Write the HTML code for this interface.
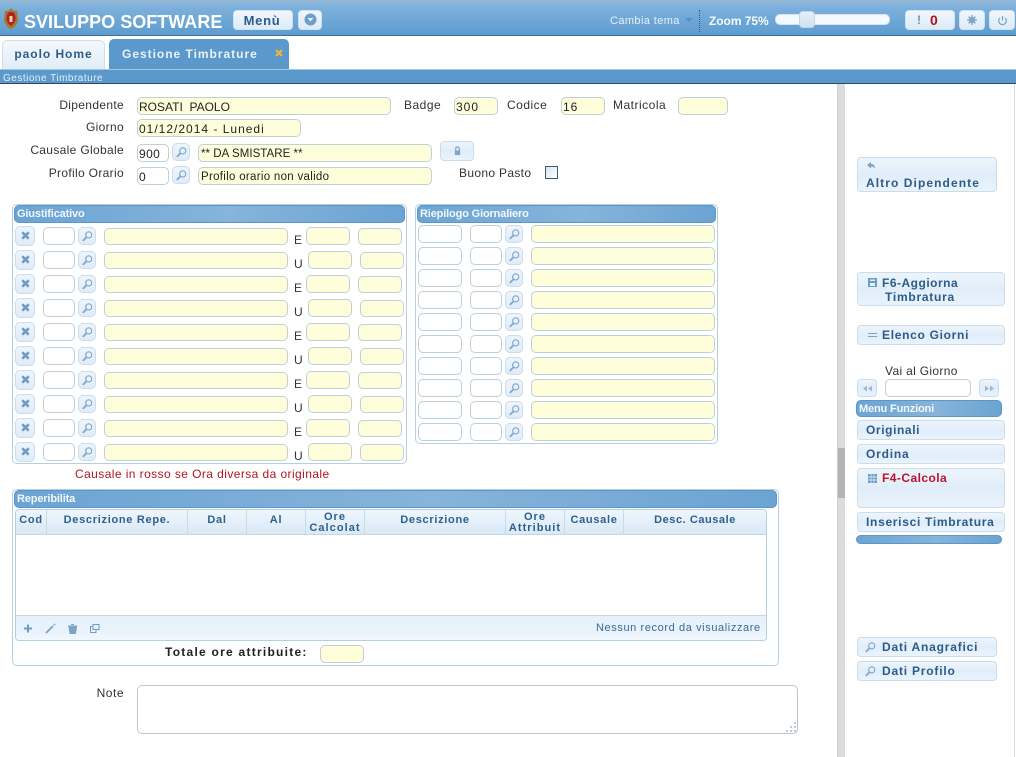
<!DOCTYPE html>
<html><head><meta charset="utf-8"><title>Gestione Timbrature</title>
<style>
*{box-sizing:border-box}
html,body{margin:0;padding:0;width:1016px;height:757px;overflow:hidden;background:#fff;font-family:"Liberation Sans",sans-serif;font-size:12px;color:#222}
div,span,svg{position:absolute}
.hd{left:0;top:0;width:1016px;height:36px;background:linear-gradient(#9fb6c8 0,#8db8dc 2px,#7bb0db 8px,#5f9dd0 34px);border-bottom:1px solid #3d6f9b}
.hb{background:linear-gradient(#f0f7fd,#dcebf8);border:1px solid #cfe0ee;border-radius:4px}
.lb{white-space:nowrap;letter-spacing:.33px;color:#333}
.r{text-align:right}
.f{height:18px;border:1px solid #bfd0d8;border-radius:5px;background:#fffedb;white-space:nowrap;overflow:hidden;padding:2px 0 0 1px;letter-spacing:.4px;color:#222;line-height:14px}
.w{background:#fff}
.b{background:linear-gradient(#edf5fc,#e0edf9 50%,#e9f3fc);border:1px solid #cbdcec;border-radius:4px;color:#2d5c8a;font-weight:bold;letter-spacing:.8px;white-space:nowrap;font-size:12px}
.b span{white-space:nowrap}
.s{width:18px;height:18px;background:linear-gradient(#edf5fc,#dfecf8);border:1px solid #cbdcec;border-radius:5px}
.s svg{left:2px;top:2px}
.p{border:1px solid #b4d0e0;border-radius:5px;background:#fff}
.t{height:18px;background:linear-gradient(100deg,#6ba4d3,#86b4da 55%,#6ba3d2);border:1px solid #5a96c8;border-radius:5px;color:#f2f8fc;font-weight:bold;font-size:11px;letter-spacing:-.15px;line-height:16px;padding-left:2px;white-space:nowrap}
.gr,.rr{left:0;width:0;height:0}
.x{left:15px;top:-1px;width:20px;height:20px;background:linear-gradient(#edf5fc,#dfecf8);border:1px solid #cbdcec;border-radius:5px}
.x svg{left:4px;top:3px}
.gr .c{left:43px;width:32px}.gr .s{left:78px}.gr .d{left:104px;width:184px;top:1px;height:17px}
.gr .t1{left:306px;width:44px}.gr .t2{left:358px;width:44px;top:1px;height:17px}
.gr .l{left:294px;top:7px;line-height:12px;color:#333}
.gr.u .t1{left:308px}.gr.u .t2{left:360px}
.rr .a{left:418px;width:44px}.rr .c{left:470px;width:32px}.rr .s{left:505px}.rr .d{left:531px;width:184px}
.th{top:510px;height:25px;border-right:1px solid #c9d9e6;color:#2f5f8c;font-weight:bold;font-size:11px;letter-spacing:.7px;text-align:center;line-height:11px;white-space:nowrap}
.th.o{letter-spacing:1.05px;padding-top:1px}
.th.n{line-height:21px}
.th.o{padding-top:2px}
</style></head><body>
<svg width="0" height="0" style="position:absolute"><defs>
<symbol id="m" viewBox="0 0 14 14"><circle cx="8.300" cy="5.300" r="3.300" fill="none" stroke="#7ea6ca" stroke-width="1.200"/><path d="M5.800 8 2.500 11.200" stroke="#7ea6ca" stroke-width="1.900" stroke-linecap="round"/></symbol>
<symbol id="k" viewBox="0 0 12 12"><path d="M2.500 2.500 9.500 9.500M9.500 2.500 2.500 9.500" stroke="#6f9cc4" stroke-width="2.800"/></symbol>
</defs></svg>

<div class="hd"></div>
<svg style="left:3px;top:8px" width="16" height="21" viewBox="0 0 16 21"><path d="M8 0 10 2.500 14 3 15 11C15 16 11 20 8 21 5 20 1 16 1 11L2 3 6 2.500Z" fill="#a8782c"/><path d="M8 4C11 4 12.500 6 12.500 10.500 12.500 14 10 16.500 8 18 6 16.500 3.500 14 3.500 10.500 3.500 6 5 4 8 4Z" fill="#b3202a"/><path d="M6.500 8H9.500V14H6.500Z" fill="#e8d9a8"/></svg>
<div style="left:24px;top:11px;color:#fff;font-weight:bold;font-size:18px;line-height:22px;white-space:nowrap;letter-spacing:.02px">SVILUPPO SOFTWARE</div>
<div class="hb" style="left:233px;top:10px;width:60px;height:20px;color:#2d5c8a;font-weight:bold;font-size:13px;letter-spacing:.7px;text-align:center;line-height:20px;padding-right:2px">Menù</div>
<div class="hb" style="left:298px;top:10px;width:24px;height:20px"><svg style="left:5px;top:2px" width="13" height="13" viewBox="0 0 13 13"><circle cx="6.500" cy="6.500" r="6" fill="#6d9fcb"/><path d="M3.500 5H9.500L6.500 8.500Z" fill="#e8f2fa"/></svg></div>
<div style="left:610px;top:15px;color:#e6f0f8;font-size:11px;letter-spacing:.4px;line-height:13px;white-space:nowrap">Cambia tema</div>
<svg style="left:685px;top:18px" width="8" height="5" viewBox="0 0 8 5"><path d="M0 0H8L4 4Z" fill="#4f90c8"/></svg>
<div style="left:699px;top:10px;width:0;height:22px;border-left:1px dotted #2f5f86"></div>
<div style="left:709px;top:14px;color:#f4f9fd;font-weight:bold;font-size:12px;line-height:14px;white-space:nowrap;letter-spacing:-.05px">Zoom 75%</div>
<div style="left:775px;top:14px;width:115px;height:11px;background:#f4f9fd;border:1px solid #d5e4f0;border-radius:5px"></div>
<div style="left:799px;top:11px;width:16px;height:17px;background:linear-gradient(#e4eff9,#cfe1f1);border:1px solid #c0d6e9;border-radius:4px"></div>
<div class="hb" style="left:905px;top:10px;width:50px;height:20px"></div>
<div style="left:917px;top:13px;color:#6b8fae;font-weight:bold;font-size:12px;line-height:14px">!</div>
<div style="left:930px;top:13px;color:#b40f1f;font-weight:bold;font-size:14px;line-height:15px">0</div>
<div class="hb" style="left:959px;top:10px;width:26px;height:20px"><svg style="left:7px;top:4px" width="10" height="10" viewBox="0 0 13 13"><circle cx="6.500" cy="6.500" r="3" fill="none" stroke="#7ea6ca" stroke-width="2.500"/><path d="M6.500 0V13M0 6.500H13M2 2 11 11M11 2 2 11" stroke="#7ea6ca" stroke-width="1.700"/></svg></div>
<div class="hb" style="left:989px;top:10px;width:26px;height:20px"><svg style="left:7px;top:4px" width="11" height="11" viewBox="0 0 13 13"><path d="M6.500 1V6.500M3.500 3.500A4.500 4.500 0 1 0 9.500 3.500" fill="none" stroke="#7ea6ca" stroke-width="1.500"/></svg></div>

<div style="left:2px;top:40px;width:103px;height:29px;background:linear-gradient(#f3f8fc,#e1edf8);border:1px solid #d0dfeb;border-bottom:0;border-radius:5px 5px 0 0;color:#2d5c8a;font-weight:bold;font-size:12px;letter-spacing:.95px;text-align:center;line-height:26px">paolo Home</div>
<div style="left:109px;top:39px;width:180px;height:30px;background:#5b98cb;border-radius:5px 5px 0 0;color:#e8f2fa;font-weight:bold;font-size:12px;letter-spacing:.98px;line-height:30px;padding-left:13px;white-space:nowrap">Gestione Timbrature</div>
<svg style="left:275px;top:49px" width="8" height="8" viewBox="0 0 8 8"><path d="M1 1 7 7M7 1 1 7" stroke="#e8b93c" stroke-width="2.200"/></svg>
<div style="left:0;top:69px;width:1016px;height:15px;background:#5b98cb;border-bottom:1px solid #2c4a63;border-top:1px solid #a9c6de;color:#e4eff8;font-size:10px;letter-spacing:.5px;line-height:17px;padding-left:3px;white-space:nowrap;overflow:hidden">Gestione Timbrature</div>

<div style="left:837px;top:84px;width:8px;height:673px;background:#dcdcdc;border-left:1px solid #cfcfcf"></div>
<div style="left:838px;top:448px;width:7px;height:50px;background:#b4b4b4"></div>
<div style="left:1014px;top:84px;width:1px;height:673px;background:#dcdcdc"></div>

<div class="lb r" style="left:30px;width:94px;top:98px">Dipendente</div>
<div class="f" style="left:137px;top:97px;width:254px;letter-spacing:0">ROSATI&nbsp; PAOLO</div>
<div class="lb" style="left:404px;top:98px;letter-spacing:.5px">Badge</div>
<div class="f" style="left:454px;top:97px;width:44px;letter-spacing:1px">300</div>
<div class="lb" style="left:507px;top:98px;letter-spacing:.5px">Codice</div>
<div class="f" style="left:561px;top:97px;width:44px;letter-spacing:1px">16</div>
<div class="lb" style="left:613px;top:98px;letter-spacing:.5px">Matricola</div>
<div class="f" style="left:678px;top:97px;width:50px"></div>
<div class="lb r" style="left:30px;width:94px;top:120px">Giorno</div>
<div class="f" style="left:137px;top:119px;width:164px;letter-spacing:1px">01/12/2014 - Lunedi</div>
<div class="lb r" style="left:20px;width:104px;top:143px">Causale Globale</div>
<div class="f w" style="left:137px;top:144px;width:32px">900</div>
<div class="s" style="left:172px;top:143px"><svg width="13" height="13"><use href="#m"/></svg></div>
<div class="f" style="left:198px;top:144px;width:234px;padding-left:2px;letter-spacing:.05px;font-size:11.500px">** DA SMISTARE **</div>
<div class="b" style="left:440px;top:141px;width:34px;height:20px"><svg style="left:12px;top:4px" width="9" height="10" viewBox="0 0 10 11"><path d="M2 5H8V10H2Z" fill="#7ea6ca"/><path d="M3 5V3A2 2 0 0 1 7 3V5" fill="none" stroke="#7ea6ca" stroke-width="1.400"/></svg></div>
<div class="lb r" style="left:20px;width:104px;top:166px">Profilo Orario</div>
<div class="f w" style="left:137px;top:167px;width:32px">0</div>
<div class="s" style="left:172px;top:166px"><svg width="13" height="13"><use href="#m"/></svg></div>
<div class="f" style="left:198px;top:167px;width:234px;padding-left:2px;letter-spacing:.3px;font-size:11.500px">Profilo orario non valido</div>
<div class="lb" style="left:459px;top:166px">Buono Pasto</div>
<div style="left:545px;top:166px;width:13px;height:13px;border:1px solid #3d5a73;background:linear-gradient(135deg,#dde3e8,#fff)"></div>

<div class="p" style="left:12px;top:204px;width:395px;height:260px"></div>
<div class="t" style="left:14px;top:205px;width:391px">Giustificativo</div>
<div class="gr" style="top:227px"><div class="x"><svg width="11" height="11"><use href="#k"/></svg></div><div class="f w c"></div><div class="s"><svg width="13" height="13"><use href="#m"/></svg></div><div class="f d"></div><div class="l">E</div><div class="f t1"></div><div class="f t2"></div></div>
<div class="gr u" style="top:251px"><div class="x"><svg width="11" height="11"><use href="#k"/></svg></div><div class="f w c"></div><div class="s"><svg width="13" height="13"><use href="#m"/></svg></div><div class="f d"></div><div class="l">U</div><div class="f t1"></div><div class="f t2"></div></div>
<div class="gr" style="top:275px"><div class="x"><svg width="11" height="11"><use href="#k"/></svg></div><div class="f w c"></div><div class="s"><svg width="13" height="13"><use href="#m"/></svg></div><div class="f d"></div><div class="l">E</div><div class="f t1"></div><div class="f t2"></div></div>
<div class="gr u" style="top:299px"><div class="x"><svg width="11" height="11"><use href="#k"/></svg></div><div class="f w c"></div><div class="s"><svg width="13" height="13"><use href="#m"/></svg></div><div class="f d"></div><div class="l">U</div><div class="f t1"></div><div class="f t2"></div></div>
<div class="gr" style="top:323px"><div class="x"><svg width="11" height="11"><use href="#k"/></svg></div><div class="f w c"></div><div class="s"><svg width="13" height="13"><use href="#m"/></svg></div><div class="f d"></div><div class="l">E</div><div class="f t1"></div><div class="f t2"></div></div>
<div class="gr u" style="top:347px"><div class="x"><svg width="11" height="11"><use href="#k"/></svg></div><div class="f w c"></div><div class="s"><svg width="13" height="13"><use href="#m"/></svg></div><div class="f d"></div><div class="l">U</div><div class="f t1"></div><div class="f t2"></div></div>
<div class="gr" style="top:371px"><div class="x"><svg width="11" height="11"><use href="#k"/></svg></div><div class="f w c"></div><div class="s"><svg width="13" height="13"><use href="#m"/></svg></div><div class="f d"></div><div class="l">E</div><div class="f t1"></div><div class="f t2"></div></div>
<div class="gr u" style="top:395px"><div class="x"><svg width="11" height="11"><use href="#k"/></svg></div><div class="f w c"></div><div class="s"><svg width="13" height="13"><use href="#m"/></svg></div><div class="f d"></div><div class="l">U</div><div class="f t1"></div><div class="f t2"></div></div>
<div class="gr" style="top:419px"><div class="x"><svg width="11" height="11"><use href="#k"/></svg></div><div class="f w c"></div><div class="s"><svg width="13" height="13"><use href="#m"/></svg></div><div class="f d"></div><div class="l">E</div><div class="f t1"></div><div class="f t2"></div></div>
<div class="gr u" style="top:443px"><div class="x"><svg width="11" height="11"><use href="#k"/></svg></div><div class="f w c"></div><div class="s"><svg width="13" height="13"><use href="#m"/></svg></div><div class="f d"></div><div class="l">U</div><div class="f t1"></div><div class="f t2"></div></div>
<div class="lb" style="left:75px;top:467px;color:#b5141f;letter-spacing:.42px">Causale in rosso se Ora diversa da originale</div>

<div class="p" style="left:415px;top:204px;width:303px;height:240px"></div>
<div class="t" style="left:417px;top:205px;width:299px">Riepilogo Giornaliero</div>
<div class="rr" style="top:225px"><div class="f w a"></div><div class="f w c"></div><div class="s"><svg width="13" height="13"><use href="#m"/></svg></div><div class="f d"></div></div>
<div class="rr" style="top:247px"><div class="f w a"></div><div class="f w c"></div><div class="s"><svg width="13" height="13"><use href="#m"/></svg></div><div class="f d"></div></div>
<div class="rr" style="top:269px"><div class="f w a"></div><div class="f w c"></div><div class="s"><svg width="13" height="13"><use href="#m"/></svg></div><div class="f d"></div></div>
<div class="rr" style="top:291px"><div class="f w a"></div><div class="f w c"></div><div class="s"><svg width="13" height="13"><use href="#m"/></svg></div><div class="f d"></div></div>
<div class="rr" style="top:313px"><div class="f w a"></div><div class="f w c"></div><div class="s"><svg width="13" height="13"><use href="#m"/></svg></div><div class="f d"></div></div>
<div class="rr" style="top:335px"><div class="f w a"></div><div class="f w c"></div><div class="s"><svg width="13" height="13"><use href="#m"/></svg></div><div class="f d"></div></div>
<div class="rr" style="top:357px"><div class="f w a"></div><div class="f w c"></div><div class="s"><svg width="13" height="13"><use href="#m"/></svg></div><div class="f d"></div></div>
<div class="rr" style="top:379px"><div class="f w a"></div><div class="f w c"></div><div class="s"><svg width="13" height="13"><use href="#m"/></svg></div><div class="f d"></div></div>
<div class="rr" style="top:401px"><div class="f w a"></div><div class="f w c"></div><div class="s"><svg width="13" height="13"><use href="#m"/></svg></div><div class="f d"></div></div>
<div class="rr" style="top:423px"><div class="f w a"></div><div class="f w c"></div><div class="s"><svg width="13" height="13"><use href="#m"/></svg></div><div class="f d"></div></div>

<div class="p" style="left:12px;top:489px;width:767px;height:177px"></div>
<div class="t" style="left:14px;top:490px;width:763px;height:18px">Reperibilita</div>
<div style="left:15px;top:509px;width:752px;height:132px;border:1px solid #b4cfdf;border-radius:4px;background:#fff"></div>
<div style="left:16px;top:510px;width:750px;height:25px;background:linear-gradient(#eef6fd,#e1eef9 60%,#d9e9f6);border-bottom:1px solid #c5d7e5;border-radius:3px 3px 0 0"></div>
<div class="th n" style="left:16px;width:31px">Cod</div>
<div class="th n" style="left:47px;width:141px">Descrizione Repe.</div>
<div class="th n" style="left:188px;width:59px">Dal</div>
<div class="th n" style="left:247px;width:59px">Al</div>
<div class="th o" style="left:306px;width:59px">Ore<br>Calcolat</div>
<div class="th n" style="left:365px;width:141px">Descrizione</div>
<div class="th o" style="left:506px;width:59px">Ore<br>Attribuit</div>
<div class="th n" style="left:565px;width:59px">Causale</div>
<div class="th n" style="left:624px;width:142px;letter-spacing:.55px;border-right:0">Desc. Causale</div>
<div style="left:16px;top:615px;width:750px;height:25px;background:linear-gradient(#e6f1fb,#e8f2fb 60%,#f2f8fd);border-top:1px solid #c5d7e5;border-radius:0 0 3px 3px"></div>
<svg style="left:23px;top:623px" width="82" height="12" viewBox="0 0 82 12"><path d="M5 1.500V9.500M1 5.500H9" stroke="#6f9cc4" stroke-width="2"/><path d="M23 10 30 3M31 1 32 2" stroke="#7fa3c4" stroke-width="1.800"/><path d="M45 3H54M46 4 47 10.500H52.500L53.500 4Z M48 1.500H51" fill="#7fa3c4" stroke="#7fa3c4"/><path d="M70 3.500H67.500V9.500H73V7M70 1.500H76V6.500H70Z" fill="none" stroke="#6f9cc4"/></svg>
<div style="left:596px;top:622px;color:#3f6b90;font-size:11px;letter-spacing:.6px;line-height:13px;white-space:nowrap">Nessun record da visualizzare</div>
<div style="left:165px;top:645px;color:#222;font-weight:bold;font-size:12px;letter-spacing:1.25px;line-height:15px;white-space:nowrap">Totale ore attribuite:</div>
<div class="f" style="left:320px;top:645px;width:44px"></div>
<div class="lb r" style="left:60px;width:64px;top:686px;letter-spacing:.5px">Note</div>
<div class="f w" style="left:137px;top:685px;width:661px;height:49px;border-color:#b7c8d4"></div>
<svg style="left:785px;top:721px" width="12" height="12"><path d="M9 1h2v2H9zM5 5h2v2H5zM9 5h2v2H9zM1 9h2v2H1zM5 9h2v2H5zM9 9h2v2H9z" fill="#c2ccd4"/></svg>

<div class="b" style="left:857px;top:157px;width:140px;height:35px;letter-spacing:1.08px"><svg style="left:8px;top:3px" width="11" height="10" viewBox="0 0 11 10"><path d="M1 4 5 1V3C8 3 9 5 9 8 8 6 7 5.500 5 5.500V7.500Z" fill="#7fa3c4"/></svg><span style="left:8px;top:18px;line-height:15px">Altro Dipendente</span></div>
<div class="b" style="left:857px;top:272px;width:148px;height:34px"><svg style="left:10px;top:5px" width="9" height="9" viewBox="0 0 9 9"><path d="M0 0H9V9H0Z" fill="#6f9cc4"/><path d="M2 1.500H7V3H2ZM2 5H7V8H2Z" fill="#e6f1fb"/></svg><span style="left:24px;top:3px;line-height:14px;letter-spacing:.5px">F6-Aggiorna</span><span style="left:27px;top:17px;line-height:14px;letter-spacing:.75px">Timbratura</span></div>
<div class="b" style="left:857px;top:325px;width:148px;height:20px;letter-spacing:.7px"><svg style="left:10px;top:7px" width="9" height="5"><path d="M0 .5H9M0 3.500H9" stroke="#7fa3c4"/></svg><span style="left:24px;top:2px;line-height:15px">Elenco Giorni</span></div>
<div class="lb" style="left:885px;top:364px">Vai al Giorno</div>
<div class="b" style="left:857px;top:379px;width:20px;height:18px"><svg style="left:5px;top:5px" width="10" height="7"><path d="M0 3.500 4 .5V6.500ZM5 3.500 9 .5V6.500Z" fill="#9db9d2"/></svg></div>
<div class="f w" style="left:885px;top:379px;width:86px"></div>
<div class="b" style="left:979px;top:379px;width:20px;height:18px"><svg style="left:5px;top:5px" width="10" height="7"><path d="M0 .5 4 3.500 0 6.500ZM5 .5 9 3.500 5 6.500Z" fill="#9db9d2"/></svg></div>
<div class="t" style="left:856px;top:400px;width:146px;height:17px;line-height:16px">Menu Funzioni</div>
<div class="b" style="left:857px;top:420px;width:148px;height:20px;letter-spacing:.6px"><span style="left:8px;top:2px;line-height:15px">Originali</span></div>
<div class="b" style="left:857px;top:444px;width:148px;height:20px"><span style="left:8px;top:2px;line-height:15px">Ordina</span></div>
<div class="b" style="left:857px;top:468px;width:148px;height:40px;letter-spacing:.45px"><svg style="left:10px;top:5px" width="9" height="9" viewBox="0 0 9 9"><path d="M0 0H9V9H0Z" fill="#6f9cc4"/><path d="M3 0V9M6 0V9M0 3H9M0 6H9" stroke="#e6f1fb" stroke-width=".7"/></svg><span style="left:24px;top:2px;line-height:15px;color:#c0102a">F4-Calcola</span></div>
<div class="b" style="left:857px;top:512px;width:148px;height:20px;letter-spacing:.7px"><span style="left:8px;top:2px;line-height:15px">Inserisci Timbratura</span></div>
<div class="t" style="left:856px;top:535px;width:146px;height:9px"></div>
<div class="b" style="left:857px;top:637px;width:140px;height:20px"><svg style="left:6px;top:3px" width="13" height="13"><use href="#m"/></svg><span style="left:24px;top:2px;line-height:15px">Dati Anagrafici</span></div>
<div class="b" style="left:857px;top:661px;width:140px;height:20px"><svg style="left:6px;top:3px" width="13" height="13"><use href="#m"/></svg><span style="left:24px;top:2px;line-height:15px">Dati Profilo</span></div>
</body></html>
